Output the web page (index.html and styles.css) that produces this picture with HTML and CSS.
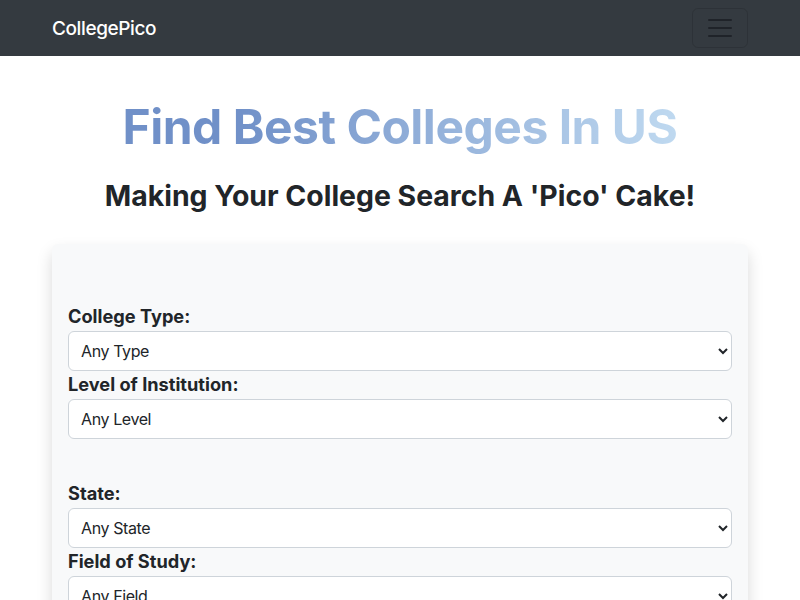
FILE: index.html
```html
<!DOCTYPE html>
<html lang="en">
<head>
<meta charset="utf-8">
<title>CollegePico</title>
<link rel="stylesheet" href="styles.css">
</head>
<body>
<nav class="navbar">
  <div class="container nav-inner">
    <a class="brand" href="#">CollegePico</a>
    <button class="toggler" type="button" aria-label="Toggle navigation">
      <svg width="30" height="30" viewBox="0 0 30 30"><path stroke="#1f2329" stroke-width="2" stroke-linecap="round" d="M4 7h22M4 15h22M4 23h22"/></svg>
    </button>
  </div>
</nav>
<main class="container">
  <h1 class="title">Find Best Colleges In US</h1>
  <h2 class="subtitle">Making Your College Search A 'Pico' Cake!</h2>
  <form class="card">
    <div class="group group-first">
      <label class="label" for="type">College Type:</label>
      <select class="select" id="type"><option>Any Type</option></select>
      <label class="label" for="level">Level of Institution:</label>
      <select class="select" id="level"><option>Any Level</option></select>
    </div>
    <div class="group group-second">
      <label class="label" for="state">State:</label>
      <select class="select" id="state"><option>Any State</option></select>
      <label class="label" for="field">Field of Study:</label>
      <select class="select" id="field"><option>Any Field</option></select>
    </div>
  </form>
</main>
</body>
</html>
```
FILE: styles.css
```css
* { box-sizing: border-box; }
html, body { margin: 0; }
body {
  font-family: Inter, "Noto Sans", sans-serif;
  color: #212529;
  background: #fff;
}
.container { width: 720px; margin: 0 auto; padding: 0 12px; }
.navbar { background: #343a40; height: 56px; }
.nav-inner { display: flex; align-items: center; justify-content: space-between; height: 56px; }
.brand { color: #fff; text-decoration: none; font-size: 19px; font-weight: 500; letter-spacing: -0.4px; }
.toggler {
  width: 56px; height: 40px; display: flex; align-items: center; justify-content: center;
  background: transparent; border: 1px solid rgba(0,0,0,0.12); border-radius: 6px; padding: 0;
}
.title {
  margin: 42px auto 0; text-align: center; font-size: 48px; font-weight: 700; line-height: 1.2; letter-spacing: -0.5px;
  background: linear-gradient(90deg, #7090c8 20%, #bfd9f0 100%);
  -webkit-background-clip: text; background-clip: text; color: transparent;
  width: fit-content;
}
.subtitle { margin: 23px 0 0; text-align: center; font-size: 28.4px; font-weight: 700; line-height: 1.2; }
.card {
  margin-top: 31px; background: #f8f9fa; padding: 16px; border-radius: 6px;
  box-shadow: 0 0.5rem 1rem rgba(0,0,0,0.15);
  min-height: 400px;
}
.group { display: flex; flex-direction: column; }
.group-first { padding-top: 43px; }
.group-second { padding-top: 41px; }
.label { font-size: 18.2px; font-weight: 700; line-height: 27px; margin-bottom: 1px; display: block; }
.select {
  display: block; width: 100%; height: 40px; padding: 0 36px 0 8px;
  font-family: inherit; font-size: 16px; letter-spacing: -0.4px; color: #212529; background: #fff;
  border: 1px solid #ced4da; border-radius: 6px;
}
```
